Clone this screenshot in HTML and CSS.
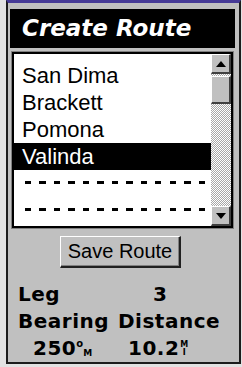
FILE: index.html
```html
<!DOCTYPE html>
<html lang="en">
<head>
<meta charset="UTF-8">
<title>Create Route</title>
<link rel="stylesheet" href="styles.css">
</head>
<body>
    <div class="window">
        <div class="title">Create Route</div>

        <div class="list">
            <div class="list-inner">
                <ul class="items">
                    <li>San Dima</li>
                    <li>Brackett</li>
                    <li>Pomona</li>
                    <li class="selected">Valinda</li>
                    <li class="empty"><span class="dashes"></span></li>
                    <li class="empty"><span class="dashes"></span></li>
                </ul>
                <div class="scrollbar">
                    <div class="scroll-btn">
                        <svg width="10" height="6" viewBox="0 0 10 6"><path d="M5 0 L10 6 L0 6 Z" fill="#000"/></svg>
                    </div>
                    <div class="track">
                        <div class="thumb"></div>
                    </div>
                    <div class="scroll-btn">
                        <svg width="10" height="6" viewBox="0 0 10 6"><path d="M0 0 L10 0 L5 6 Z" fill="#000"/></svg>
                    </div>
                </div>
            </div>
        </div>

        <div class="actions">
            <button class="save-btn">Save Route</button>
        </div>

        <div class="info">
            <span class="label">Leg</span>
            <span class="value leg">3</span>
            <span class="label">Bearing</span>
            <span class="label">Distance</span>
            <span class="value bearing">250<span class="deg">o</span><span class="sub">M</span></span>
            <span class="value dist">10.2<span class="stack"><span>M</span><span>I</span></span></span>
        </div>
    </div>
</body>
</html>
```

FILE: styles.css
```css
body {
    margin: 0;
    padding: 0;
    background-color: #e2e2e2;
    font-family: "Liberation Sans", Arial, sans-serif;
}

.window {
    margin-left: 6px;
    width: 235px;
    height: 364px;
    box-sizing: border-box;
    background-color: #c0c0c0;
    border-top: 3px solid #463a96;
    border-left: 2px solid #1c1c1c;
    border-right: 2px solid #1c1c1c;
    border-bottom: 2px solid #1c1c1c;
    overflow: hidden;
}

.title {
    margin: 6px 4px 0 2px;
    height: 39px;
    line-height: 39px;
    padding-left: 12px;
    background-color: #000;
    color: #fff;
    font-family: "DejaVu Sans", sans-serif;
    font-weight: bold;
    font-style: oblique;
    font-size: 23px;
}

.list {
    margin: 3px 5px 0 3px;
    height: 178px;
    box-sizing: border-box;
    border: 1px solid #808080;
}

.list-inner {
    height: 100%;
    box-sizing: border-box;
    border: 2px solid #000;
    background-color: #fff;
    display: flex;
}

.items {
    flex: 1;
    list-style: none;
    margin: 0;
    padding: 8px 0 0 0;
}

.items li {
    height: 27px;
    line-height: 27px;
    padding-left: 8px;
    font-size: 22px;
    color: #000;
}

.items li.selected {
    background-color: #000;
    color: #fff;
}

.items li.empty {
    display: flex;
    align-items: center;
    padding-left: 11px;
}

.dashes {
    display: block;
    width: 180px;
    height: 3px;
    margin-top: -2px;
    background: repeating-linear-gradient(90deg, #000 0 6px, transparent 6px 14.5px);
}

.scrollbar {
    width: 20px;
    display: flex;
    flex-direction: column;
}

.scroll-btn {
    height: 20px;
    box-sizing: border-box;
    background-color: #c0c0c0;
    border-top: 1px solid #fff;
    border-left: 1px solid #fff;
    border-right: 2px solid #404040;
    border-bottom: 2px solid #404040;
    display: flex;
    align-items: center;
    justify-content: center;
}

.track {
    flex: 1;
    background: repeating-conic-gradient(#ffffff 0 25%, #a8a8a8 0 50%) 0 0 / 2px 2px;
    padding-top: 2px;
}

.thumb {
    height: 28px;
    box-sizing: border-box;
    background-color: #c0c0c0;
    border-top: 1px solid #fff;
    border-left: 1px solid #fff;
    border-right: 2px solid #404040;
    border-bottom: 2px solid #404040;
}

.actions {
    margin-top: 7px;
    padding-left: 52px;
    display: flex;
}

.save-btn {
    width: 121px;
    height: 32px;
    padding: 0;
    background-color: #c0c0c0;
    border-top: 1px solid #fff;
    border-left: 1px solid #fff;
    border-right: 2px solid #202020;
    border-bottom: 2px solid #202020;
    box-shadow: inset -1px -1px 0 #808080;
    font-family: "Liberation Sans", Arial, sans-serif;
    font-size: 20px;
    color: #000;
}

.info {
    margin-top: 13px;
    padding-left: 10px;
    display: grid;
    grid-template-columns: 100px 1fr;
    grid-auto-rows: 27px;
    font-family: "DejaVu Sans", sans-serif;
    font-weight: bold;
    font-size: 20px;
    line-height: 27px;
    letter-spacing: 0.5px;
    color: #000;
}

.value {
    white-space: nowrap;
}

.value.leg {
    padding-left: 35px;
}

.value.bearing {
    padding-left: 15px;
}

.value.dist {
    padding-left: 10px;
}

.deg {
    font-size: 10px;
    line-height: 0;
    vertical-align: 8px;
    letter-spacing: 0;
}

.sub {
    font-size: 9px;
    line-height: 0;
    vertical-align: -1px;
    letter-spacing: 0;
}

.stack {
    display: inline-block;
    font-size: 8px;
    line-height: 8px;
    letter-spacing: 0;
    margin-left: 1px;
    text-align: center;
}

.stack span {
    display: block;
}
```
